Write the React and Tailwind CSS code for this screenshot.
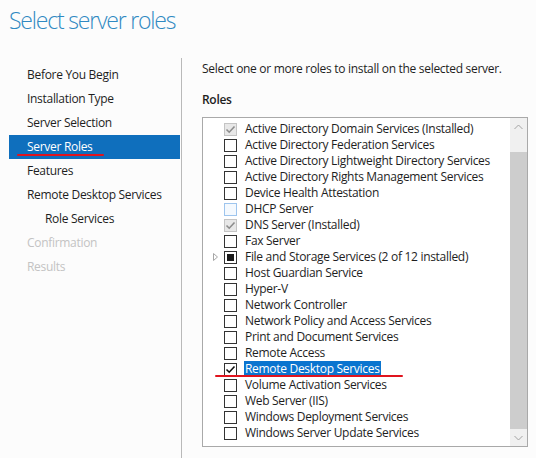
import React from 'react';

const navItems = [
  { label: 'Before You Begin' },
  { label: 'Installation Type' },
  { label: 'Server Selection' },
  { label: 'Server Roles', active: true },
  { label: 'Features' },
  { label: 'Remote Desktop Services' },
  { label: 'Role Services', sub: true },
  { label: 'Confirmation', disabled: true },
  { label: 'Results', disabled: true },
];

// state: installed | empty | hover | partial | checked
const roles = [
  { label: 'Active Directory Domain Services (Installed)', state: 'installed' },
  { label: 'Active Directory Federation Services', state: 'empty' },
  { label: 'Active Directory Lightweight Directory Services', state: 'empty' },
  { label: 'Active Directory Rights Management Services', state: 'empty' },
  { label: 'Device Health Attestation', state: 'empty' },
  { label: 'DHCP Server', state: 'hover' },
  { label: 'DNS Server (Installed)', state: 'installed' },
  { label: 'Fax Server', state: 'empty' },
  { label: 'File and Storage Services (2 of 12 installed)', state: 'partial', expand: true },
  { label: 'Host Guardian Service', state: 'empty' },
  { label: 'Hyper-V', state: 'empty' },
  { label: 'Network Controller', state: 'empty' },
  { label: 'Network Policy and Access Services', state: 'empty' },
  { label: 'Print and Document Services', state: 'empty' },
  { label: 'Remote Access', state: 'empty' },
  { label: 'Remote Desktop Services', state: 'checked', selected: true },
  { label: 'Volume Activation Services', state: 'empty' },
  { label: 'Web Server (IIS)', state: 'empty' },
  { label: 'Windows Deployment Services', state: 'empty' },
  { label: 'Windows Server Update Services', state: 'empty' },
];

const CheckBox = ({ state }) => {
  if (state === 'installed') {
    return (
      <span className="w-[13px] h-[13px] border border-[#c4c4c4] bg-[#e8e8e8] flex items-center justify-center">
        <svg width="11" height="11" viewBox="0 0 11 11">
          <path d="M1.5 5.5 L4.2 8.2 L9.5 2.5" fill="none" stroke="#8c8c8c" strokeWidth="1.6" />
        </svg>
      </span>
    );
  }
  if (state === 'hover') {
    return <span className="w-[13px] h-[13px] border border-[#9ec5ee] bg-[#f4f9fe]" />;
  }
  if (state === 'partial') {
    return (
      <span className="w-[13px] h-[13px] border border-[#333333] bg-white flex items-center justify-center">
        <span className="w-[7px] h-[7px] bg-[#1a1a1a]" />
      </span>
    );
  }
  if (state === 'checked') {
    return (
      <span className="w-[13px] h-[13px] border border-[#333333] bg-white flex items-center justify-center">
        <svg width="11" height="11" viewBox="0 0 11 11">
          <path d="M1.5 5.5 L4.2 8.2 L9.5 2.5" fill="none" stroke="#111111" strokeWidth="1.6" />
        </svg>
      </span>
    );
  }
  return <span className="w-[13px] h-[13px] border border-[#333333] bg-white" />;
};

export default function App() {
  return (
    <div className="relative w-[536px] h-[458px] overflow-hidden bg-[#fcfcfc] text-[#1e1e1e] font-['Open_Sans','Noto_Sans',sans-serif] tracking-[-0.3px]">
      {/* Header */}
      <div className="h-[58px] pl-[9px] pt-[4px]">
        <h1 className="text-[23px] leading-[32px] font-light text-[#2f89c2] font-['Open_Sans','Noto_Sans',sans-serif] tracking-[-1.2px]">
          Select server roles
        </h1>
      </div>

      <div className="flex h-[400px]">
        {/* Left nav */}
        <nav className="w-[182px] border-r border-[#b9b9b9] pt-[5px] pl-[9px] pr-[1px] flex flex-col">
          {navItems.map((item) => (
            <div
              key={item.label}
              className={
                'relative h-[24px] flex items-center text-[12px] ' +
                (item.sub ? 'pl-[36px] ' : 'pl-[18px] ') +
                (item.active
                  ? 'bg-[#0f6fbd] text-white'
                  : item.disabled
                  ? 'text-[#c3c3c3]'
                  : 'text-[#1e1e1e]')
              }
            >
              {item.label}
              {item.active && (
                <span className="absolute left-[8px] top-[19px] w-[87px] h-[2px] bg-[#e0141e] rounded-full" />
              )}
            </div>
          ))}
        </nav>

        {/* Main */}
        <main className="flex-1 pl-[20px] pr-[8px] flex flex-col">
          <p className="text-[12px] leading-[16px] mt-[3px]">
            Select one or more roles to install on the selected server.
          </p>
          <p className="text-[12px] leading-[16px] font-semibold mt-[15px]">Roles</p>

          <div className="relative mt-[9px] w-[326px] h-[330px] border border-[#a9a9a9] bg-white flex">
            <ul className="flex-1 pt-[3px] flex flex-col">
              {roles.map((r) => (
                <li key={r.label} className="h-[16px] flex items-center text-[12px]">
                  <span className="w-[21px] flex justify-end pr-[6px]">
                    {r.expand && (
                      <svg width="5" height="8" viewBox="0 0 5 8">
                        <path d="M0.5 0.5 L4.5 4 L0.5 7.5 Z" fill="none" stroke="#a6a6a6" strokeWidth="1" />
                      </svg>
                    )}
                  </span>
                  <CheckBox state={r.state} />
                  <span
                    className={
                      'ml-[7px] px-[1px] h-[16px] leading-[16px] whitespace-nowrap ' +
                      (r.selected ? 'bg-[#0a74cf] text-white' : '')
                    }
                  >
                    {r.label}
                  </span>
                </li>
              ))}
            </ul>

            {/* Scrollbar */}
            <div className="w-[17px] bg-[#f0f0f0] flex flex-col">
              <div className="h-[17px] flex items-center justify-center">
                <svg width="9" height="6" viewBox="0 0 9 6">
                  <path d="M0.5 5 L4.5 1 L8.5 5" fill="none" stroke="#a3a3a3" strokeWidth="1" />
                </svg>
              </div>
              <div className="h-[17px]" />
              <div className="flex-1 bg-[#cdcdcd]" />
              <div className="h-[17px] flex items-center justify-center">
                <svg width="9" height="6" viewBox="0 0 9 6">
                  <path d="M0.5 1 L4.5 5 L8.5 1" fill="none" stroke="#a3a3a3" strokeWidth="1" />
                </svg>
              </div>
            </div>

            {/* annotation underline */}
            <span className="absolute left-[12px] top-[257px] w-[188px] h-[2px] bg-[#e0141e] rounded-full" />
          </div>
        </main>
      </div>
    </div>
  );
}
